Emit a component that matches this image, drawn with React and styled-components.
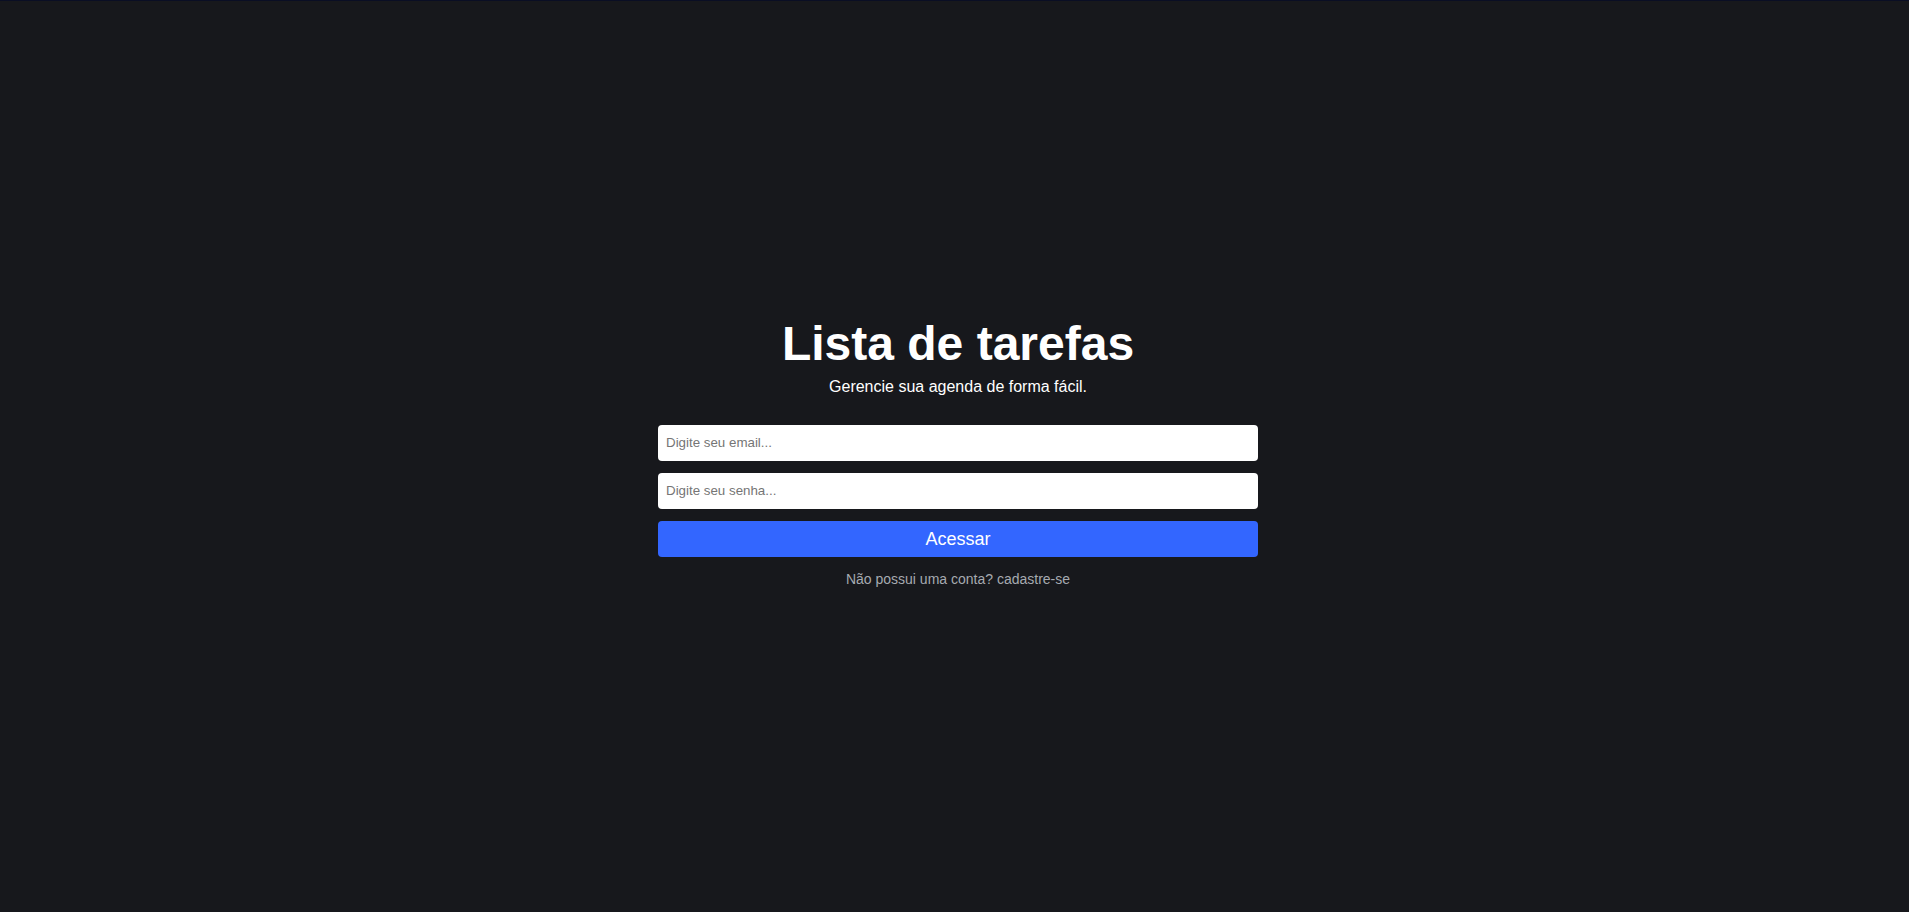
import React from 'react';
import styled, { createGlobalStyle } from 'styled-components';

const GlobalStyle = createGlobalStyle`
  * {
    box-sizing: border-box;
  }

  body {
    margin: 0;
    background: #17181c;
    font-family: "Liberation Sans", Arial, sans-serif;
  }
`;

const Page = styled.main`
  min-height: 100vh;
  display: flex;
  flex-direction: column;
  align-items: center;
  justify-content: center;
  padding: 0 0 10px 7px;
  border-top: 1px solid #0a0e24;
  background: #17181c;
  color: #fff;
`;

const Title = styled.h1`
  margin: 0;
  font-size: 48px;
  font-weight: 700;
  line-height: 1.15;
`;

const Subtitle = styled.p`
  margin: 7px 0 0;
  font-size: 16px;
  line-height: 1.15;
`;

const Form = styled.form`
  width: 600px;
  margin-top: 28px;
  display: flex;
  flex-direction: column;
  gap: 12px;
`;

const Input = styled.input`
  height: 36px;
  padding: 0 8px;
  border: 0;
  border-radius: 4px;
  background: #fff;
  font-family: "Liberation Sans", Arial, sans-serif;
  font-size: 13.33px;
  color: #222;
  outline: none;

  &::placeholder {
    color: #757575;
  }
`;

const Button = styled.button`
  height: 36px;
  border: 0;
  border-radius: 4px;
  background: #3366ff;
  color: #fff;
  font-family: "Liberation Sans", Arial, sans-serif;
  font-size: 18px;
  line-height: 1;
  cursor: pointer;
`;

const SignupLink = styled.a`
  margin-top: 14px;
  font-size: 14px;
  line-height: 1.15;
  color: #a6aab0;
  text-decoration: none;
  cursor: pointer;
`;

export default function App() {
  return (
    <>
      <GlobalStyle />
      <Page>
        <Title>Lista de tarefas</Title>
        <Subtitle>Gerencie sua agenda de forma fácil.</Subtitle>
        <Form onSubmit={(e) => e.preventDefault()}>
          <Input type="text" placeholder="Digite seu email..." />
          <Input type="password" placeholder="Digite seu senha..." />
          <Button type="submit">Acessar</Button>
        </Form>
        <SignupLink>Não possui uma conta? cadastre-se</SignupLink>
      </Page>
    </>
  );
}
